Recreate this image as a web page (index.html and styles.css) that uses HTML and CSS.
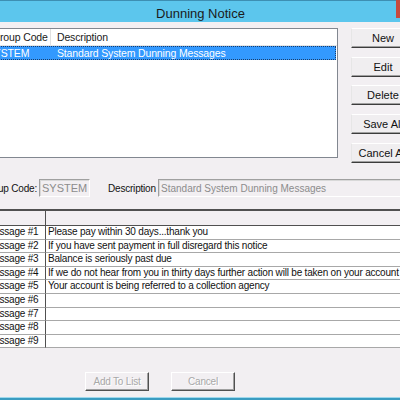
FILE: index.html
```html
<!DOCTYPE html>
<html>
<head>
<meta charset="utf-8">
<link rel="stylesheet" href="styles.css">
</head>
<body>
<div class="window">
  <div class="titlebar">
    <span class="title">Dunning Notice</span>
    <span class="close"></span>
  </div>
  <div class="client">
    <div class="top">
      <div class="list">
        <div class="list-head">
          <div class="lh c1">Group Code</div>
          <div class="lh c2">Description</div>
        </div>
        <div class="list-row selected">
          <div class="li c1">SYSTEM</div>
          <div class="li c2">Standard System Dunning Messages</div>
        </div>
      </div>
      <div class="side">
        <div class="btn">New</div>
        <div class="btn">Edit</div>
        <div class="btn">Delete</div>
        <div class="btn">Save All</div>
        <div class="btn">Cancel All</div>
      </div>
    </div>
    <div class="fields">
      <div class="lbl lbl-code">Group Code:</div>
      <div class="tb tb-code">SYSTEM</div>
      <div class="lbl lbl-desc">Description</div>
      <div class="tb tb-desc">Standard System Dunning Messages</div>
    </div>
    <div class="grid">
      <div class="gh g1"></div><div class="gh g2"></div>
      <div class="gc g1">Message #1</div><div class="gc g2">Please pay within 30 days...thank you</div>
      <div class="gc g1">Message #2</div><div class="gc g2">If you have sent payment in full disregard this notice</div>
      <div class="gc g1">Message #3</div><div class="gc g2">Balance is seriously past due</div>
      <div class="gc g1">Message #4</div><div class="gc g2">If we do not hear from you in thirty days further action will be taken on your account</div>
      <div class="gc g1">Message #5</div><div class="gc g2">Your account is being referred to a collection agency</div>
      <div class="gc g1">Message #6</div><div class="gc g2"></div>
      <div class="gc g1">Message #7</div><div class="gc g2"></div>
      <div class="gc g1">Message #8</div><div class="gc g2"></div>
      <div class="gc g1">Message #9</div><div class="gc g2"></div>
    </div>
    <div class="bottom">
      <div class="btn2">Add To List</div>
      <div class="btn2">Cancel</div>
    </div>
  </div>
  <div class="frame-bottom"></div>
</div>
</body>
</html>
```
FILE: styles.css
```css
html, body {
  margin: 0;
  padding: 0;
}
body {
  width: 400px;
  height: 400px;
  overflow: hidden;
  background: #f2eff2;
  font-family: "Liberation Sans", Arial, sans-serif;
}
.window {
  width: 400px;
  height: 400px;
  display: flex;
  flex-direction: column;
  overflow: hidden;
}
.titlebar {
  position: relative;
  height: 21px;
  border-top: 1px solid #3d8fb3;
  background: #5cc6ed;
  display: flex;
  justify-content: center;
  flex-shrink: 0;
}
.title {
  font-size: 13px;
  color: #1b1b1b;
  line-height: 21px;
  padding-top: 2px;
  padding-left: 1px;
}
.close {
  position: absolute;
  right: 0;
  top: -1px;
  width: 4px;
  height: 18px;
  background: #c74a3e;
}
.client {
  margin-left: -30px;
  width: 460px;
  display: flex;
  flex-direction: column;
  flex: 1;
}
.top {
  display: flex;
  align-items: flex-start;
  padding-top: 6px;
  height: 130px;
}
.list {
  margin-left: 10px;
  width: 357px;
  height: 128px;
  background: #fff;
  border: 1px solid #828790;
  border-left: none;
  font-size: 10.5px;
  letter-spacing: -0.15px;
}
.list-head {
  display: flex;
  height: 16px;
  border-bottom: 1px solid #e5e5e5;
}
.lh {
  line-height: 16px;
  color: #1a1a1a;
}
.lh.c1 {
  width: 58px;
  padding-left: 12px;
  border-right: 1px solid #e0e0e0;
  white-space: nowrap;
  overflow: hidden;
}
.lh.c2 {
  padding-left: 6px;
}
.list-row {
  display: flex;
  height: 14px;
  line-height: 14px;
}
.list-row.selected {
  background: #3399ff;
  color: #fff;
  outline: 1px dotted #1a3d6b;
  outline-offset: -1px;
  width: 356px;
}
.li.c1 {
  width: 63px;
  padding-left: 7px;
}
.li.c2 {
  padding-left: 7px;
}
.side {
  margin-left: 13px;
  width: 66px;
  display: flex;
  flex-direction: column;
  gap: 8.7px;
}
.btn {
  height: 18px;
  line-height: 18px;
  text-align: center;
  font-size: 11px;
  color: #111;
  background: #f0eef0;
  border: 1px solid;
  border-color: #ffffff #3c3c3c #3c3c3c #e6e6e6;
  box-shadow: inset -1px -1px 0 #a0a0a0;
  white-space: nowrap;
  padding-right: 2px;
}
.fields {
  display: flex;
  margin-top: 20px;
  height: 19px;
  align-items: center;
  font-size: 10px;
  letter-spacing: -0.2px;
}
.lbl {
  color: #111;
  white-space: nowrap;
}
.lbl-code {
  width: 67px;
  text-align: right;
}
.tb {
  height: 18px;
  line-height: 17px;
  padding-left: 2px;
  color: #8c8c8c;
  background: #f2eff2;
  border: 1px solid;
  border-color: #a0a0a0 #ffffff #ffffff #a0a0a0;
  box-shadow: inset 1px 1px 0 #d8d8d8;
  white-space: nowrap;
  box-sizing: border-box;
  font-size: 11px;
  letter-spacing: 0;
}
.tb-code {
  margin-left: 2px;
  width: 51px;
}
.lbl-desc {
  margin-left: 18px;
  width: 46px;
  padding-top: 2px;
}
.lbl-code {
  padding-top: 2px;
}
.tb-desc {
  margin-left: 4px;
  flex: 1;
  font-size: 10px;
}
.grid {
  margin-top: 12px;
  margin-left: 14px;
  display: grid;
  grid-template-columns: 62px 1fr;
  grid-template-rows: 15px repeat(9, 13.6px);
  border-top: 2px solid #505050;
  font-size: 10px;
  letter-spacing: -0.2px;
}
.gh {
  background: #f2eff2;
  border-bottom: 1px solid #505050;
}
.gh.g1, .gc.g1 {
  border-right: 1px solid #505050;
}
.gc {
  background: #fff;
  border-bottom: 1px solid #a8a8a8;
  line-height: 12.6px;
  padding-left: 2px;
  white-space: nowrap;
  overflow: hidden;
  color: #111;
}
.gc.g1 {
  padding-left: 2px;
}
.bottom {
  display: flex;
  gap: 22px;
  margin-top: 23.5px;
  margin-left: 115px;
}
.btn2 {
  width: 62px;
  height: 17px;
  line-height: 17px;
  text-align: center;
  font-size: 10px;
  letter-spacing: -0.2px;
  color: #a8a8a8;
  text-shadow: 1px 1px 0 #ffffff;
  background: #f2eff2;
  border: 1px solid;
  border-color: #ffffff #505050 #505050 #ffffff;
  box-shadow: inset -1px -1px 0 #a0a0a0;
}
.frame-bottom {
  margin-top: auto;
  height: 2px;
  border-top: 1px solid #9fd8ec;
  background: #3a9cc1;
  flex-shrink: 0;
}
```
